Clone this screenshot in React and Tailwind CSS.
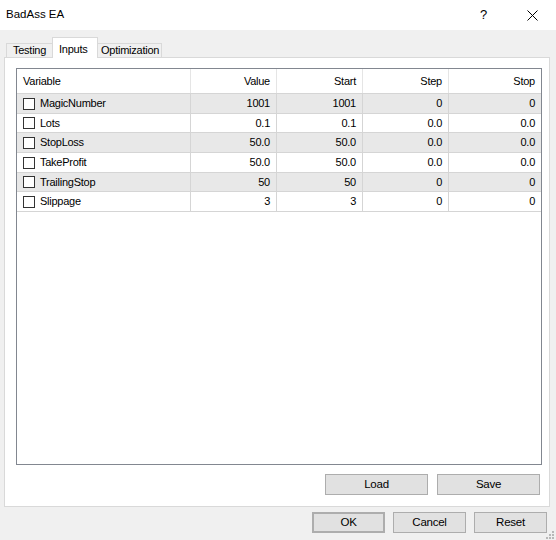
import React from 'react';

const rows = [
  { name: 'MagicNumber', value: '1001', start: '1001', step: '0', stop: '0', h: 'h-[20px]', bg: 'bg-[#e8e8e8]' },
  { name: 'Lots', value: '0.1', start: '0.1', step: '0.0', stop: '0.0', h: 'h-[19px]', bg: 'bg-white' },
  { name: 'StopLoss', value: '50.0', start: '50.0', step: '0.0', stop: '0.0', h: 'h-[20px]', bg: 'bg-[#e8e8e8]' },
  { name: 'TakeProfit', value: '50.0', start: '50.0', step: '0.0', stop: '0.0', h: 'h-[20px]', bg: 'bg-white' },
  { name: 'TrailingStop', value: '50', start: '50', step: '0', stop: '0', h: 'h-[19px]', bg: 'bg-[#e8e8e8]' },
  { name: 'Slippage', value: '3', start: '3', step: '0', stop: '0', h: 'h-[20px]', bg: 'bg-white' },
];

const Checkbox = () => (
  <div className="w-[12px] h-[12px] bg-white border border-[#333333] shrink-0" />
);

const Button = ({ children, className = '' }) => (
  <button
    className={`h-[21px] bg-[#e1e1e1] border border-[#adadad] flex items-center justify-center text-[11.5px] ${className}`}
  >
    {children}
  </button>
);

const App = () => {
  return (
    <div className="relative w-[556px] h-[540px] bg-[#f0f0f0] flex flex-col font-['Liberation_Sans',Arial,sans-serif] text-[11px] tracking-[-0.25px] text-black overflow-hidden">
      {/* title bar */}
      <div className="h-[30px] bg-white flex items-center pl-[6px] shrink-0">
        <span className="text-[11.5px] tracking-normal">BadAss EA</span>
        <span className="ml-auto mr-[40px] text-[13px]">?</span>
        <svg width="11" height="11" viewBox="0 0 11 11" className="mr-[18px]">
          <path d="M0.5 0.5 L10.5 10.5 M10.5 0.5 L0.5 10.5" stroke="#000" strokeWidth="1" />
        </svg>
      </div>

      {/* tabs */}
      <div className="mt-[7px] h-[20px] flex items-end pl-[6px] shrink-0">
        <div className="w-[46px] h-[14px] border-l border-t border-[#d9d9d9] flex items-center pl-[6px] text-[11px]">
          Testing
        </div>
        <div className="relative z-10 -mb-px w-[46px] h-[21px] bg-white border-l border-t border-r border-[#d9d9d9] flex items-start pt-[3px] pl-[6px] text-[11px]">
          Inputs
        </div>
        <div className="w-[64px] h-[14px] border-t border-r border-[#d9d9d9] flex items-center pl-[3px] text-[11px]">
          Optimization
        </div>
      </div>

      {/* panel */}
      <div className="ml-[4px] w-[546px] h-[450px] bg-white border border-[#d9d9d9] flex flex-col pl-[11px] pt-[10px] shrink-0">
        <div className="w-[526px] h-[397px] border border-[#828790] flex flex-col">
          <div className="grid grid-cols-[174px_86px_86px_86px_1fr] h-[25px] border-b border-[#d5d5d5]">
            <div className="flex items-center pl-[6px] border-r border-[#e5e5e5]">Variable</div>
            <div className="flex items-center justify-end pr-[6px] border-r border-[#e5e5e5]">Value</div>
            <div className="flex items-center justify-end pr-[6px] border-r border-[#e5e5e5]">Start</div>
            <div className="flex items-center justify-end pr-[6px] border-r border-[#e5e5e5]">Step</div>
            <div className="flex items-center justify-end pr-[6px]">Stop</div>
          </div>
          {rows.map((r) => (
            <div
              key={r.name}
              className={`grid grid-cols-[174px_86px_86px_86px_1fr] ${r.h} ${r.bg} border-b border-[#d5d5d5]`}
            >
              <div className="flex items-center pl-[6px] gap-[5px] border-r border-[#d5d5d5]">
                <Checkbox />
                <span>{r.name}</span>
              </div>
              <div className="flex items-center justify-end pr-[6px] border-r border-[#d5d5d5]">{r.value}</div>
              <div className="flex items-center justify-end pr-[6px] border-r border-[#d5d5d5]">{r.start}</div>
              <div className="flex items-center justify-end pr-[6px] border-r border-[#d5d5d5]">{r.step}</div>
              <div className="flex items-center justify-end pr-[6px]">{r.stop}</div>
            </div>
          ))}
        </div>

        <div className="flex justify-end gap-[9px] mt-[9px] pr-[9px]">
          <Button className="w-[103px]">Load</Button>
          <Button className="w-[103px]">Save</Button>
        </div>
      </div>

      {/* dialog buttons */}
      <div className="flex justify-end gap-[8px] mt-[5px] pr-[9px]">
        <Button className="w-[73px] border-2 border-[#0078d7]">OK</Button>
        <Button className="w-[73px]">Cancel</Button>
        <Button className="w-[73px]">Reset</Button>
      </div>

      {/* size grip */}
      <svg width="8" height="8" viewBox="0 0 8 8" className="absolute right-[2px] bottom-[1px]">
        <rect x="6" y="0" width="2" height="2" fill="#b8b8b8" />
        <rect x="3" y="3" width="2" height="2" fill="#b8b8b8" />
        <rect x="6" y="3" width="2" height="2" fill="#b8b8b8" />
        <rect x="0" y="6" width="2" height="2" fill="#b8b8b8" />
        <rect x="3" y="6" width="2" height="2" fill="#b8b8b8" />
        <rect x="6" y="6" width="2" height="2" fill="#b8b8b8" />
      </svg>
    </div>
  );
};

export default App;
